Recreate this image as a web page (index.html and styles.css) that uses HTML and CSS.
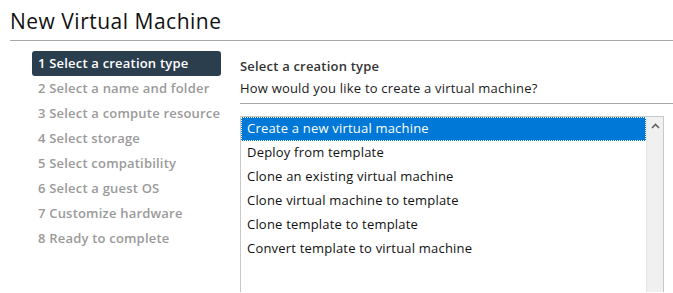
FILE: index.html
```html
<!DOCTYPE html>
<html lang="en">
<head>
  <meta charset="UTF-8">
  <title>New Virtual Machine</title>
  <link rel="stylesheet" href="styles.css">
</head>
<body>

<header class="wizard-header">
  <h1>New Virtual Machine</h1>
</header>

<div class="wizard">
  <!-- Steps -->
  <ol class="steps">
    <li class="step active">1 Select a creation type</li>
    <li class="step">2 Select a name and folder</li>
    <li class="step">3 Select a compute resource</li>
    <li class="step">4 Select storage</li>
    <li class="step">5 Select compatibility</li>
    <li class="step">6 Select a guest OS</li>
    <li class="step">7 Customize hardware</li>
    <li class="step">8 Ready to complete</li>
  </ol>

  <!-- Page content -->
  <section class="page">
    <h2 class="page-title">Select a creation type</h2>
    <p class="page-desc">How would you like to create a virtual machine?</p>

    <div class="listbox">
      <ul class="options">
        <li class="option selected">Create a new virtual machine</li>
        <li class="option">Deploy from template</li>
        <li class="option">Clone an existing virtual machine</li>
        <li class="option">Clone virtual machine to template</li>
        <li class="option">Clone template to template</li>
        <li class="option">Convert template to virtual machine</li>
      </ul>
      <div class="scrollbar">
        <svg class="arrow" width="9" height="6" viewBox="0 0 9 6">
          <path d="M1 5 L4.5 1.5 L8 5" fill="none" stroke="#606060" stroke-width="1.6"/>
        </svg>
      </div>
    </div>
  </section>
</div>

</body>
</html>
```

FILE: styles.css
```css
:root {
  --text: #1b1b1b;
  --muted: #9a9a9a;
  --active-bg: #2b3e4e;
  --rule: #a8a8a8;
  --select: #0078d7;
}

* {
  margin: 0;
  padding: 0;
  box-sizing: border-box;
}

body {
  font-family: 'Open Sans', Arial, sans-serif;
  color: var(--text);
  background: #fff;
  overflow: hidden;
}

.wizard-header {
  margin-left: 10px;
  padding-top: 8px;
  height: 41px;
  border-bottom: 1px solid var(--rule);
}

.wizard-header h1 {
  font-size: 21px;
  font-weight: 400;
  line-height: 26px;
  letter-spacing: 0.5px;
  color: #111;
}

.wizard {
  display: flex;
  padding-top: 10px;
}

/* Steps */
.steps {
  list-style: none;
  width: 240px;
  padding-left: 32px;
  padding-right: 19px;
}

.step {
  height: 25px;
  line-height: 25px;
  padding-left: 6px;
  font-size: 13px;
  font-weight: 600;
  letter-spacing: 0.2px;
  color: var(--muted);
  white-space: nowrap;
}

.step.active {
  background: var(--active-bg);
  color: #fff;
  border-radius: 3px;
}

/* Page */
.page {
  flex: 1;
  letter-spacing: 0.2px;
}

.page-title {
  font-size: 13px;
  font-weight: 600;
  color: #333;
  margin-top: 5px;
  line-height: 20px;
}

.page-desc {
  font-size: 13px;
  line-height: 24px;
  padding-bottom: 3px;
  border-bottom: 1px solid var(--rule);
}

.listbox {
  display: flex;
  margin-top: 12px;
  width: 424px;
  height: 176px;
  border: 1px solid #c8c8c8;
  border-bottom: none;
}

.options {
  list-style: none;
  flex: 1;
}

.option {
  height: 24px;
  line-height: 23px;
  padding-left: 6px;
  font-size: 13px;
  color: #111;
}

.option.selected {
  background: var(--select);
  color: #fff;
  outline: 1px dotted #fff;
  outline-offset: -1px;
}

.scrollbar {
  width: 17px;
  background: #f0f0f0;
  border-left: 1px solid #e4e4e4;
  display: flex;
  justify-content: center;
  padding-top: 6px;
}

.arrow {
  display: block;
}
```
